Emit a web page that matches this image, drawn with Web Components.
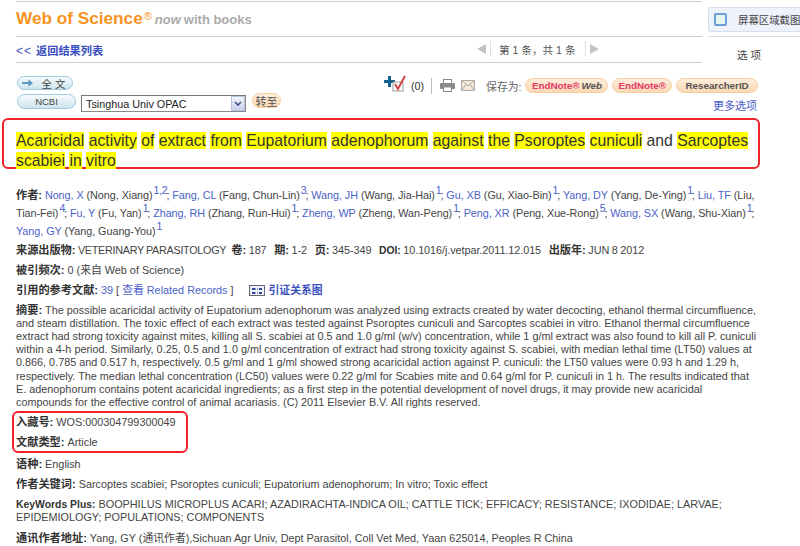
<!DOCTYPE html>
<html><head><meta charset="utf-8"><style>
html,body{margin:0;padding:0;background:#fff;width:800px;height:546px;overflow:hidden}
body{font-family:"Liberation Sans","Noto Sans CJK SC",sans-serif;color:#444}
</style></head><body>
<wos-page></wos-page>
<script>
const CJK='"Liberation Sans","Noto Sans CJK SC",sans-serif';
function def(name,css,html){
  customElements.define(name,class extends HTMLElement{
    constructor(){super();this.attachShadow({mode:'open'}).innerHTML=`<style>${css}</style>${html}`;}
  });
}
def('wos-pill',`:host{display:inline-flex;align-items:center;justify-content:center;box-sizing:border-box;height:15px;border-radius:8px;background:linear-gradient(#fdeedd,#fbd8b2);border:1px solid #f7cf9f;font:bold 9.8px ${CJK};color:#555;padding:0 9px;white-space:nowrap}`,`<slot></slot>`);
def('wos-bluebtn',`:host{display:inline-flex;align-items:center;justify-content:center;gap:9px;box-sizing:border-box;height:14px;border-radius:8px;background:linear-gradient(#f6fbfd,#cde4ee);border:1px solid #a3cbdc;font:10.5px ${CJK};color:#444;white-space:nowrap}`,`<slot></slot>`);
def('wos-select',`:host{display:flex;align-items:center;box-sizing:border-box;height:17px;width:165px;border:1px solid #8a8a8a;border-top-color:#777;border-left-color:#777;background:#fff;font:10.8px ${CJK};color:#222;padding-left:4px;position:relative;white-space:nowrap}
.b{position:absolute;right:0;top:0;bottom:0;width:14px;background:linear-gradient(#f2f4fa,#c8d2ea);border:1px solid #b8c4de;box-sizing:border-box;display:flex;align-items:center;justify-content:center}`,`<slot></slot><span class="b"><svg width="8" height="5" viewBox="0 0 8 5"><path d="M1 1l3 3 3-3" fill="none" stroke="#3a4f8a" stroke-width="1.600"/></svg></span>`);
def('wos-field',`:host{display:block;font-size:10.83px;line-height:13.2px;color:#444;white-space:nowrap}
::slotted(b){color:#333;font-size:11.2px}
::slotted(b.l){font-size:10.4px}`,`<slot></slot>`);
def('wos-outline',`:host{display:block;box-sizing:border-box;border:2px solid #f0222a;border-radius:6px}`,`<slot></slot>`);
def('wos-page',`
:host{display:block;width:800px;height:546px;position:relative;overflow:hidden;font-family:${CJK};color:#444}
.top{display:flex;height:73px;padding-left:16px}
.hd{width:686px;flex:none;border-top:1px solid #ccc;margin-top:1px;box-sizing:border-box}
.logo{height:35px;border-bottom:1px solid #ccc;display:flex;align-items:baseline;padding-top:6px;box-sizing:border-box;white-space:nowrap}
.wos{font:bold 17.2px ${CJK};color:#f7931e}
.wos sup{font-weight:normal;font-size:11px;line-height:0;vertical-align:4px;margin-left:1px;color:#f7931e;letter-spacing:0}
.now{font:italic bold 13px ${CJK};color:#aaa;margin-left:4px}
.wb{font:bold 13px ${CJK};color:#aaa;margin-left:3px}
.nav{height:25px;border-bottom:1px solid #ccc;display:flex;align-items:center;position:relative}
.back{font:bold 11.2px ${CJK};color:#3a4fc0}
.back span{font-weight:normal;margin-right:4px;font-size:12px;letter-spacing:1px}
.pager{position:absolute;left:461px;top:0;height:24px;display:flex;align-items:center;font-size:10.6px;color:#555;white-space:nowrap}
.tri{width:0;height:0;border-style:solid;border-width:5.5px 0}
.l{border-color:transparent #c4c4c4 transparent transparent;border-right-width:9px}
.r{border-color:transparent transparent transparent #c4c4c4;border-left-width:9px}
.sep{width:1px;height:16px;background:#ddd;margin:0 8px 0 4px}
.sep2{width:1px;height:16px;background:#ddd;margin:0 4px 0 9px}
.side{width:92px;margin-left:6px;flex:none;margin-top:7px}
.shot{height:25px;width:92px;box-sizing:border-box;background:#eef3fb;border:1px solid #d5deee;border-right:0;border-radius:3px 0 0 3px;display:flex;align-items:center;font-size:10.4px;color:#444;white-space:nowrap;overflow:hidden}
.chk{width:9px;height:9px;border:2px solid #6a9fd8;background:#e6f4ee;border-radius:2px;margin:0 11px 0 5px;flex:none}
.opt{border-top:1px solid #ddd;margin-top:4px;padding:10px 0 0 29px;font-size:10.6px;color:#444;letter-spacing:3px}
.tools{height:42px;position:relative;display:flex;padding-left:17px;width:760px;box-sizing:border-box}
.leftbtns{width:300px;margin-top:3px;display:flex;flex-direction:column;align-items:flex-start}
.row2{display:flex;align-items:flex-start;margin-top:4px}
.row2 wos-select{margin:1px 0 0 5px}
.row2 wos-pill{margin:-1px 0 0 6px}
.right{position:absolute;left:384px;top:0;width:374px;height:42px}
.rline{display:flex;align-items:center;height:15px;margin-top:5px;font-size:10.8px;color:#666;white-space:nowrap}
.more{position:absolute;right:1px;top:24px;font-size:11px;color:#4a5cc8}
.ttl{margin:3px 0 0 2px;width:758px;height:51px;padding:11px 4px 0 12px;font-size:15.76px;line-height:19.5px;color:#333;white-space:nowrap}
mark{background:#ff0;color:#333;padding:0}
.body{padding:0 16px;width:760px;box-sizing:border-box}
a{color:#4a63c8;text-decoration:none}
sup{font-size:10.6px;line-height:0;vertical-align:5px;color:#4a63c8;letter-spacing:-.3px;margin:0 -1px 0 1px}
.au{margin-top:17px;line-height:18px;letter-spacing:-.06px}
.src{margin-top:3.5px;letter-spacing:-.06px;word-spacing:-.4px}
.src span{letter-spacing:-.3px}
.gap{margin-top:7px}
.abs{margin-top:6.500px}
.box{margin:1.5px 0 0 -4px;width:176px;height:42px;padding:3px 0 0 2px;box-sizing:border-box;border-radius:6px;border:2px solid #f0222a}
.box wos-field+wos-field{margin-top:7px}
.after{margin-top:5px}
.ico{display:inline-block;vertical-align:middle;margin:-2px 1px 0 0}
`,`
<div class="top">
 <div class="hd">
  <div class="logo"><span class="wos">Web of Science<sup>®</sup></span><span class="now">now</span><span class="wb">with books</span></div>
  <div class="nav"><span class="back"><span>&lt;&lt;</span>返回结果列表</span>
   <div class="pager"><span class="tri l"></span><span class="sep"></span>第 1 条，共 1 条<span class="sep2"></span><span class="tri r"></span></div></div>
 </div>
 <div class="side"><div class="shot"><span class="chk"></span>屏幕区域截图</div><div class="opt">选项</div></div>
</div>
<div class="tools">
 <div class="leftbtns">
  <wos-bluebtn style="width:56px"><svg width="11" height="8" viewBox="0 0 12 8"><path d="M0 3h7V0l5 4-5 4V5H0z" fill="#5a9cc0"/></svg><span style="letter-spacing:3px">全文</span></wos-bluebtn>
  <div class="row2"><wos-bluebtn style="width:59px;height:15px;font-size:9.5px">NCBI</wos-bluebtn>
   <wos-select>Tsinghua Univ OPAC</wos-select>
   <wos-pill style="padding:0 2px;width:29px;font-weight:normal;font-size:11px">转至</wos-pill></div>
 </div>
 <div class="right">
  <div class="rline">
   <svg width="24" height="18" viewBox="0 0 24 18" style="margin-top:-3px"><path d="M4 1h3v4h4v3H7v4H4V8H0V5h4z" fill="#14608c"/><rect x="9" y="7" width="10" height="9" fill="#fff" stroke="#999"/><path d="M11 9l3 5 7-13" fill="none" stroke="#d8454a" stroke-width="2"/></svg>
   <span style="margin-left:3px;color:#333">(0)</span>
   <span style="width:1px;height:16px;background:#bbb;margin:0 8px 0 7px"></span>
   <svg width="15" height="13" viewBox="0 0 15 13"><rect x="3.5" y=".5" width="8" height="4" fill="#fff" stroke="#888"/><rect x="0" y="4" width="15" height="6" rx="1" fill="#8a8a8a"/><rect x="3.5" y="8" width="8" height="4.5" fill="#fff" stroke="#888"/></svg>
   <svg width="14" height="11" viewBox="0 0 14 11" style="margin-left:6px"><rect x=".5" y=".5" width="13" height="10" fill="#f6ead6" stroke="#aaa"/><path d="M.5.5L7 6l6.5-5.500M.5 10.500L5 4.500M13.500 10.500L9 4.500" fill="none" stroke="#aaa"/></svg>
   <span style="margin-left:11px">保存为:</span>
   <wos-pill style="margin-left:4px;width:83px;padding:0"><span style="color:#e0386a">EndNote®</span><i style="color:#555;margin-left:2px">Web</i></wos-pill>
   <wos-pill style="margin-left:4px;width:60px;padding:0"><span style="color:#e0386a">EndNote®</span></wos-pill>
   <wos-pill style="margin-left:4px;width:82px;padding:0">ResearcherID</wos-pill>
  </div>
  <span class="more">更多选项</span>
 </div>
</div>
<wos-outline class="ttl"><mark>Acaricidal</mark> <mark>activity</mark> <mark>of</mark> <mark>extract</mark> <mark>from</mark> <mark>Eupatorium</mark> <mark>adenophorum</mark> <mark>against</mark> <mark>the</mark> <mark>Psoroptes</mark> <mark>cuniculi</mark> and <mark>Sarcoptes</mark><br><mark>scabiei</mark> <mark>in</mark> <mark>vitro</mark></wos-outline>
<div class="body">
 <wos-field class="au"><b>作者:</b> <a>Nong, X</a> (Nong, Xiang)<sup>1,2</sup>; <a>Fang, CL</a> (Fang, Chun-Lin)<sup>3</sup>; <a>Wang, JH</a> (Wang, Jia-Hai)<sup>1</sup>; <a>Gu, XB</a> (Gu, Xiao-Bin)<sup>1</sup>; <a>Yang, DY</a> (Yang, De-Ying)<sup>1</sup>; <a>Liu, TF</a> (Liu,<br>Tian-Fei)<sup>4</sup>; <a>Fu, Y</a> (Fu, Yan)<sup>1</sup>; <a>Zhang, RH</a> (Zhang, Run-Hui)<sup>1</sup>; <a>Zheng, WP</a> (Zheng, Wan-Peng)<sup>1</sup>; <a>Peng, XR</a> (Peng, Xue-Rong)<sup>5</sup>; <a>Wang, SX</a> (Wang, Shu-Xian)<sup>1</sup>;<br><a>Yang, GY</a> (Yang, Guang-You)<sup>1</sup></wos-field>
 <wos-field class="src"><b>来源出版物:</b> <span>VETERINARY PARASITOLOGY</span>&nbsp; <b>卷:</b> 187&nbsp;&nbsp; <b>期:</b> 1-2&nbsp;&nbsp; <b>页:</b> 345-349&nbsp;&nbsp; <b class="l">DOI:</b> 10.1016/j.vetpar.2011.12.015&nbsp;&nbsp; <b>出版年:</b> JUN 8 2012</wos-field>
 <wos-field class="gap"><b>被引频次:</b> 0 (来自 Web of Science)</wos-field>
 <wos-field class="gap"><b>引用的参考文献:</b> <a>39</a> [ <a>查看 Related Records</a> ] &nbsp;&nbsp;&nbsp;&nbsp;<svg class="ico" width="16" height="11" viewBox="0 0 16 11"><rect x=".5" y=".5" width="15" height="10" fill="#eef0f8" stroke="#667"/><path d="M3 3h3v2H3zM10 3h3v2h-3zM3 7h3v2H3zM10 7h3v2h-3z" fill="#334a9a"/><path d="M6 4h4M6 8h4" stroke="#334a9a" stroke-dasharray="1 1"/></svg> <a><b style="color:#3a4fc0">引证关系图</b></a></wos-field>
 <wos-field class="abs"><b>摘要:</b> The possible acaricidal activity of Eupatorium adenophorum was analyzed using extracts created by water decocting, ethanol thermal circumfluence,<br>and steam distillation. The toxic effect of each extract was tested against Psoroptes cuniculi and Sarcoptes scabiei in vitro. Ethanol thermal circumfluence<br>extract had strong toxicity against mites, killing all S. scabiei at 0.5 and 1.0 g/ml (w/v) concentration, while 1 g/ml extract was also found to kill all P. cuniculi<br>within a 4-h period. Similarly, 0.25, 0.5 and 1.0 g/ml concentration of extract had strong toxicity against S. scabiei, with median lethal time (LT50) values at<br>0.866, 0.785 and 0.517 h, respectively. 0.5 g/ml and 1 g/ml showed strong acaricidal action against P. cuniculi: the LT50 values were 0.93 h and 1.29 h,<br>respectively. The median lethal concentration (LC50) values were 0.22 g/ml for Scabies mite and 0.64 g/ml for P. cuniculi in 1 h. The results indicated that<br>E. adenophorum contains potent acaricidal ingredients; as a first step in the potential development of novel drugs, it may provide new acaricidal<br>compounds for the effective control of animal acariasis. (C) 2011 Elsevier B.V. All rights reserved.</wos-field>
 <div class="box"><wos-field><b>入藏号:</b> WOS:000304799300049</wos-field><wos-field><b>文献类型:</b> Article</wos-field></div>
 <wos-field class="after"><b>语种:</b> English</wos-field>
 <wos-field class="gap"><b>作者关键词:</b> Sarcoptes scabiei; Psoroptes cuniculi; Eupatorium adenophorum; In vitro; Toxic effect</wos-field>
 <wos-field class="gap"><b class="l">KeyWords Plus:</b> BOOPHILUS MICROPLUS ACARI; AZADIRACHTA-INDICA OIL; CATTLE TICK; EFFICACY; RESISTANCE; IXODIDAE; LARVAE;<br>EPIDEMIOLOGY; POPULATIONS; COMPONENTS</wos-field>
 <wos-field class="gap"><b>通讯作者地址:</b> Yang, GY (通讯作者),Sichuan Agr Univ, Dept Parasitol, Coll Vet Med, Yaan 625014, Peoples R China</wos-field>
</div>
`);
</script>
</body></html>
